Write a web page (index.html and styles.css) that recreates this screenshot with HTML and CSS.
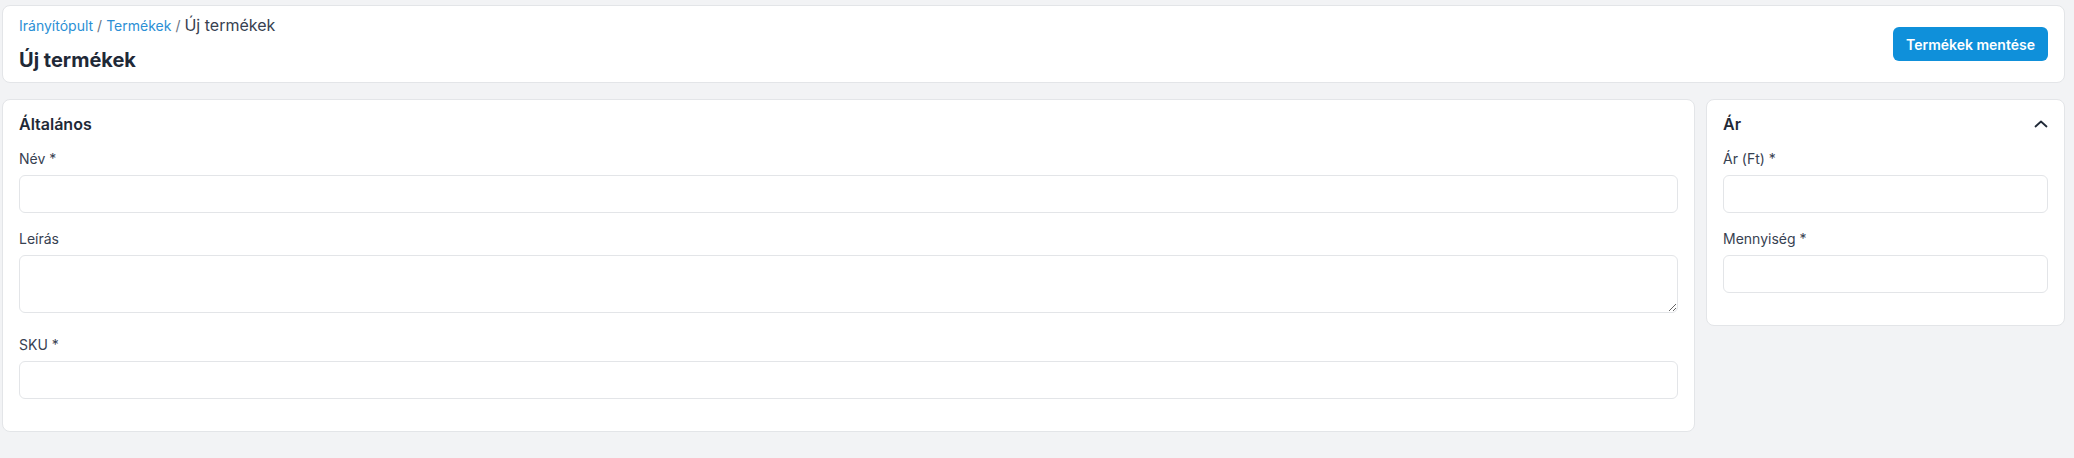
FILE: index.html
```html
<!DOCTYPE html>
<html lang="hu">
<head>
<meta charset="utf-8">
<title>Új termékek</title>
<link rel="stylesheet" href="styles.css">
</head>
<body>
<div class="page">
  <header class="card header">
    <div class="header-text">
      <nav class="crumbs">
        <a class="crumb-link" href="#">Irányítópult</a>
        <span class="sep">/</span>
        <a class="crumb-link" href="#">Termékek</a>
        <span class="sep">/</span>
        <span class="crumb-current">Új termékek</span>
      </nav>
      <h1 class="page-title">Új termékek</h1>
    </div>
    <button class="btn-primary" type="button">Termékek mentése</button>
  </header>

  <div class="columns">
    <section class="card panel">
      <h2 class="panel-title">Általános</h2>
      <div class="field">
        <label class="label">Név *</label>
        <input class="input" type="text">
      </div>
      <div class="field field-textarea">
        <label class="label">Leírás</label>
        <textarea class="input textarea"></textarea>
      </div>
      <div class="field">
        <label class="label">SKU *</label>
        <input class="input" type="text">
      </div>
    </section>

    <section class="card panel">
      <div class="panel-head">
        <h2 class="panel-title">Ár</h2>
        <svg class="chevron" width="14" height="8" viewBox="0 0 14 8" aria-hidden="true"><path d="M1.5 6.5 L7 1.5 L12.5 6.5" fill="none" stroke="#1f2937" stroke-width="1.8" stroke-linecap="round" stroke-linejoin="round"/></svg>
      </div>
      <div class="field">
        <label class="label">Ár (Ft) *</label>
        <input class="input" type="text">
      </div>
      <div class="field">
        <label class="label">Mennyiség *</label>
        <input class="input" type="text">
      </div>
    </section>
  </div>
</div>
</body>
</html>
```

FILE: styles.css
```css
* { box-sizing: border-box; }

html, body {
  margin: 0;
  padding: 0;
  background: #f2f3f5;
  font-family: Inter, "Noto Sans", "Liberation Sans", sans-serif;
  color: #1f2937;
}

.page {
  padding: 5px 9px 0 2px;
}

.card {
  background: #ffffff;
  border: 1px solid #e3e5e8;
  border-radius: 8px;
}

.header {
  display: flex;
  align-items: center;
  justify-content: space-between;
  padding: 9px 16px 9px 16px;
  height: 78px;
}

.crumbs {
  display: flex;
  align-items: baseline;
  gap: 4px;
  font-size: 14px;
  line-height: 20px;
}

.crumb-link {
  color: #2b8fd5;
  text-decoration: none;
}

.sep {
  color: #6b7280;
}

.crumb-current {
  font-size: 16px;
  color: #374151;
}

.page-title {
  margin: 10px 0 0 0;
  font-size: 20px;
  line-height: 28px;
  font-weight: 700;
  color: #1f2937;
}

.btn-primary {
  height: 34px;
  padding: 0 13px;
  white-space: nowrap;
  flex-shrink: 0;
  border: none;
  border-radius: 6px;
  background: #0f90da;
  color: #ffffff;
  font-family: inherit;
  font-size: 14px;
  font-weight: 600;
  cursor: pointer;
}

.columns {
  display: grid;
  grid-template-columns: 1fr 359px;
  gap: 11px;
  margin-top: 16px;
  align-items: start;
}

.panel {
  padding: 14px 16px 16px 16px;
}

.panel-head {
  display: flex;
  align-items: center;
  justify-content: space-between;
}

.panel-title {
  margin: 0 0 15px 0;
  font-size: 16px;
  line-height: 20px;
  font-weight: 600;
  color: #1f2937;
}

.chevron {
  margin-bottom: 15px;
}

.field {
  margin-bottom: 16px;
}

.field-textarea {
  margin-bottom: 0;
}

.label {
  display: block;
  font-size: 14px;
  line-height: 20px;
  color: #374151;
  margin-bottom: 6px;
}

.input {
  display: block;
  width: 100%;
  height: 38px;
  border: 1px solid #e3e5e8;
  border-radius: 6px;
  background: #ffffff;
  font-family: inherit;
  font-size: 14px;
  padding: 6px 10px;
  margin: 0;
}

.textarea {
  height: 58px;
  margin-bottom: 22px;
  resize: vertical;
}
```
